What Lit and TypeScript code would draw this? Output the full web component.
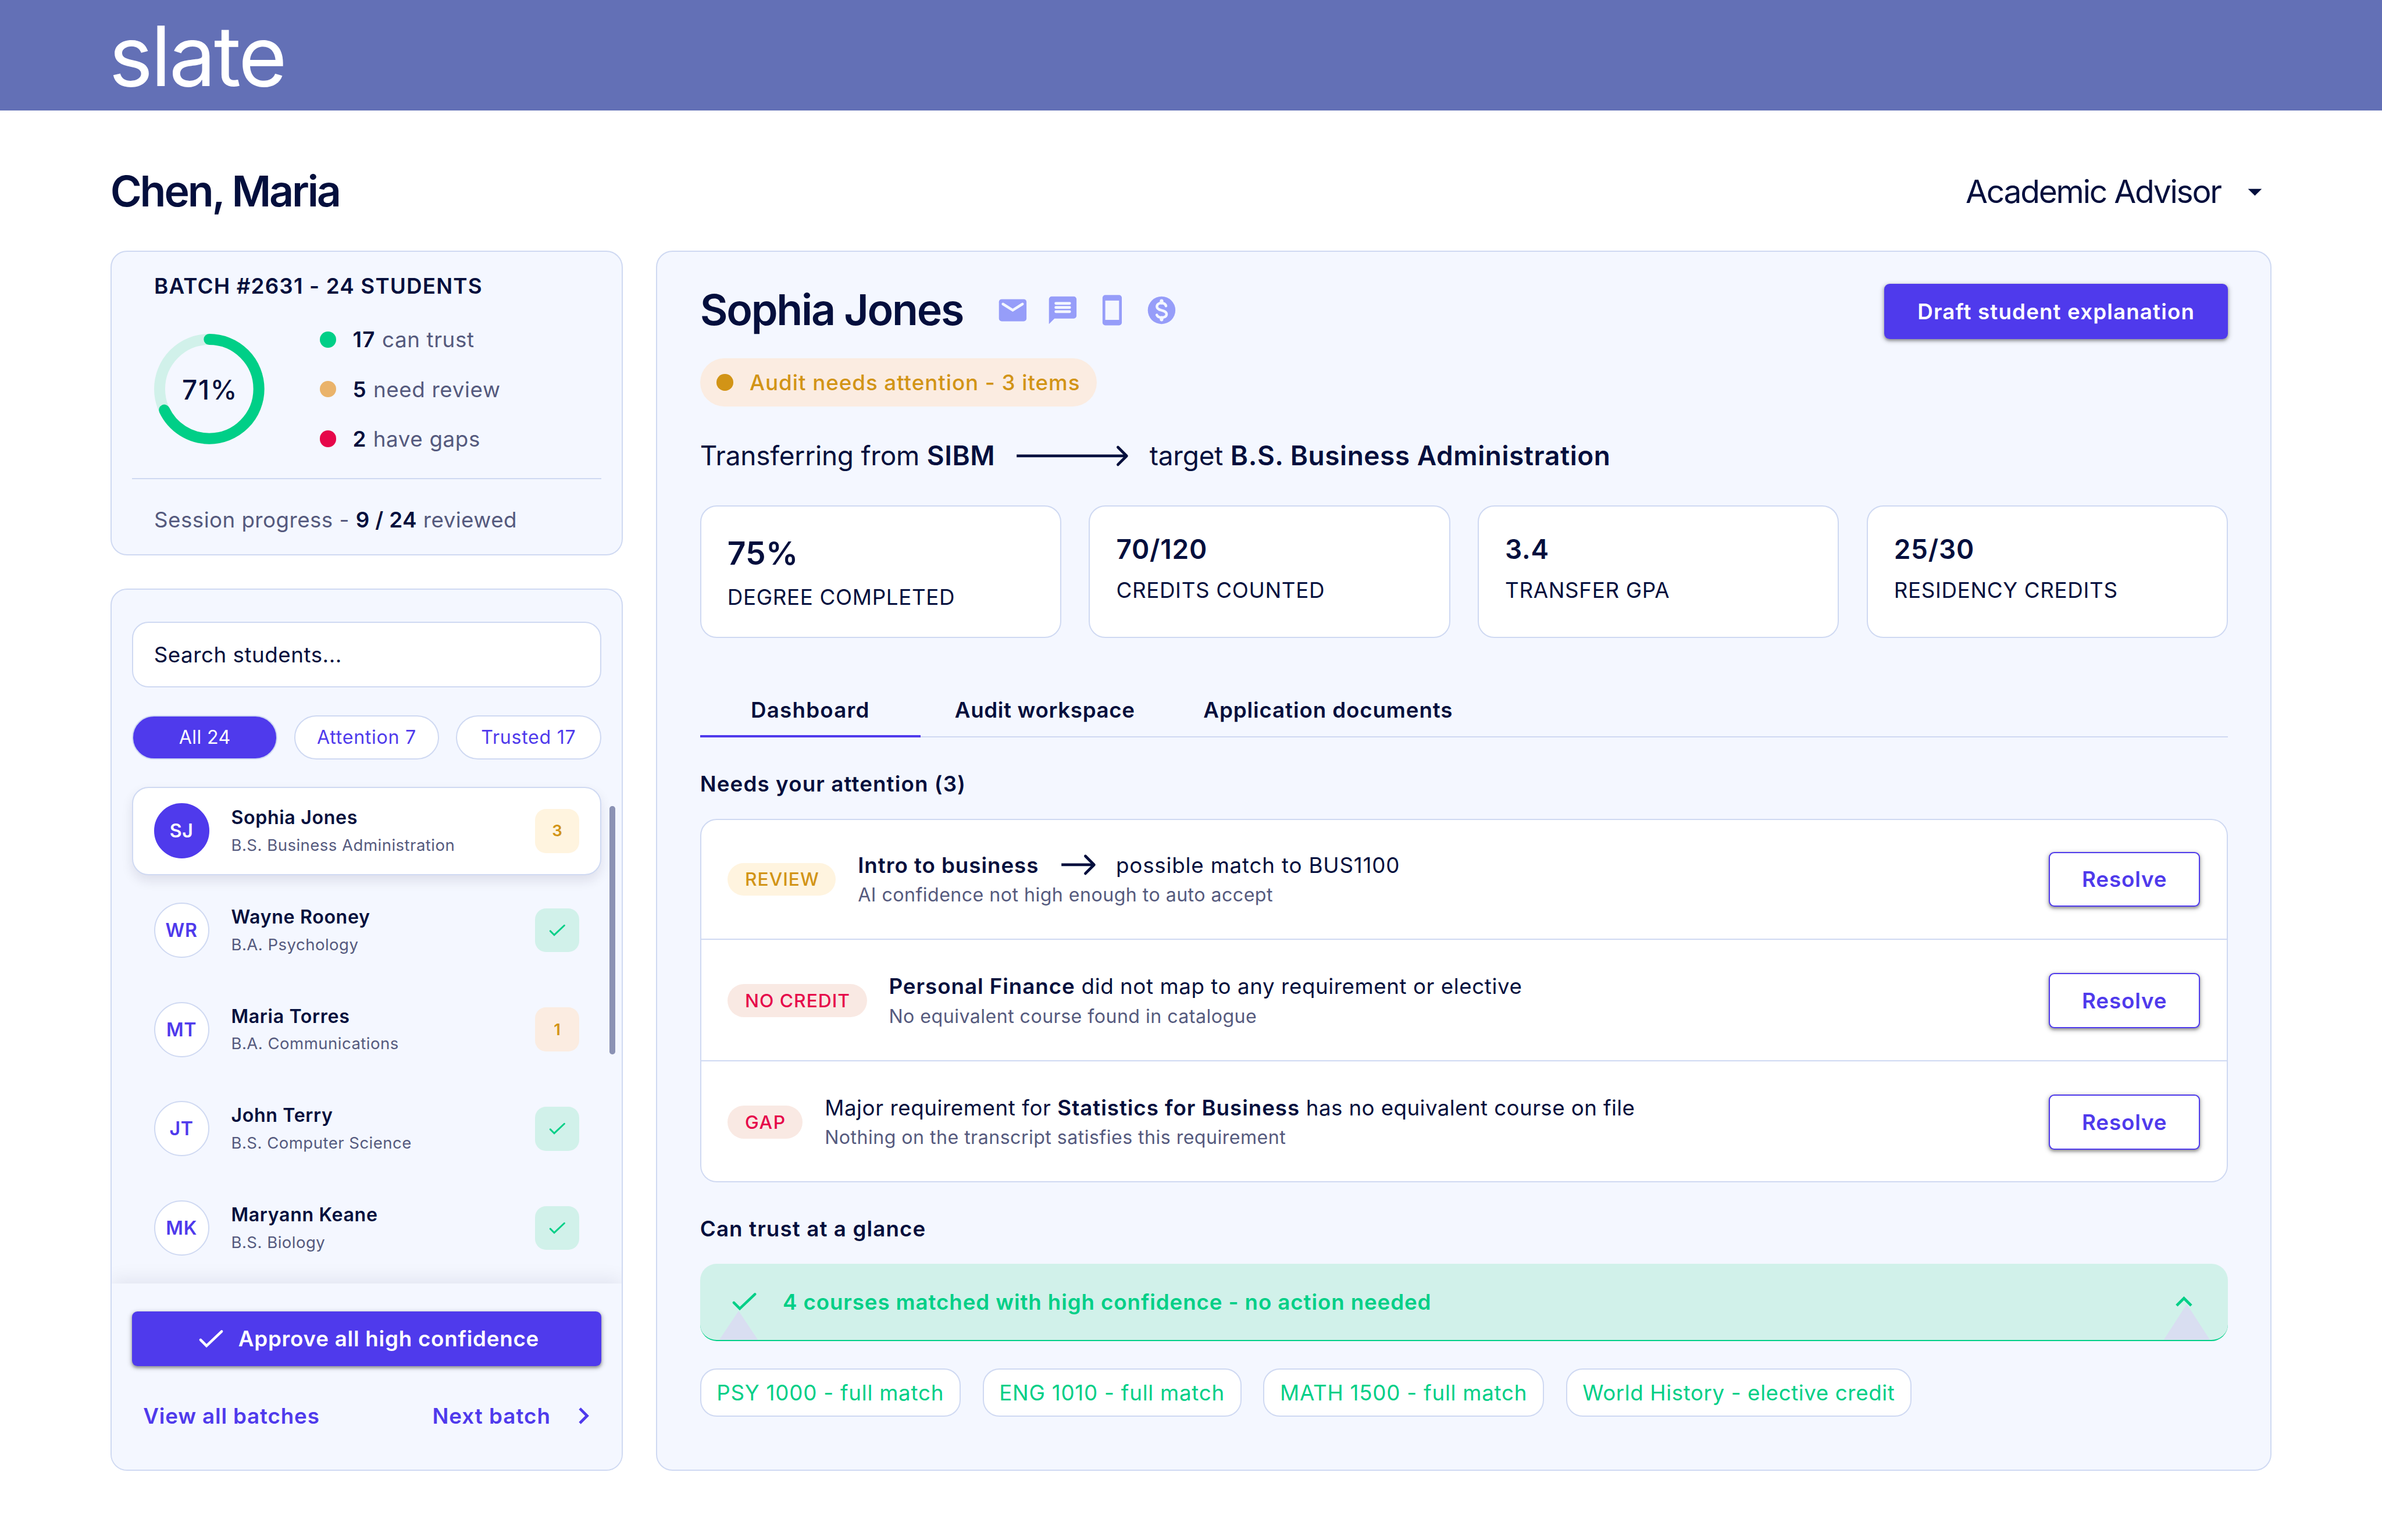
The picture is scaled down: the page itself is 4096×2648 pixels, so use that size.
import { LitElement, html, css, svg } from "lit";
import { customElement } from "lit/decorators.js";
import { classMap } from "lit/directives/class-map.js";

interface Student {
  initials: string;
  name: string;
  program: string;
  review?: number;
  tone: "review" | "gap" | "ok";
  selected?: boolean;
}

const students: Student[] = [
  { initials: "SJ", name: "Sophia Jones", program: "B.S. Business Administration", review: 3, tone: "review", selected: true },
  { initials: "WR", name: "Wayne Rooney", program: "B.A. Psychology", tone: "ok" },
  { initials: "MT", name: "Maria Torres", program: "B.A. Communications", review: 1, tone: "gap" },
  { initials: "JT", name: "John Terry", program: "B.S. Computer Science", tone: "ok" },
  { initials: "MK", name: "Maryann Keane", program: "B.S. Biology", tone: "ok" },
];

const stats = [
  { value: "75%", label: "DEGREE COMPLETED", lead: true },
  { value: "70/120", label: "CREDITS COUNTED", lead: false },
  { value: "3.4", label: "TRANSFER GPA", lead: false },
  { value: "25/30", label: "RESIDENCY CREDITS", lead: false },
];

const matches = [
  "PSY 1000 - full match",
  "ENG 1010 - full match",
  "MATH 1500 - full match",
  "World History - elective credit",
];

const checkShape = svg`<path d="M4.6 12.6L8.9 16.9L19.9 6.5" fill="none" stroke="currentColor" stroke-width="1.9" stroke-linecap="round"/>`;

@customElement("app-root")
export class AppRoot extends LitElement {
  static styles = css`
    :host {
      display: block;
      background: #fff;
    }
    * {
      box-sizing: border-box;
    }
    .page {
      --ink: #040f3d;
      --muted: #555a7e;
      --purple: #4f3aec;
      --line: #cfd9f2;
      --panel: #f4f7ff;
      --green: #00cf87;
      --mint: #d1f1ea;
      --amber: #d29416;
      --red: #e6074a;
      zoom: 2.37037;
      width: 1728px;
      height: 1117px;
      overflow: hidden;
      background: #fff;
      color: var(--ink);
      font-family: Inter, "Liberation Sans", sans-serif;
      font-size: 15.5px;
      line-height: 19px;
      letter-spacing: 0.22px;
      white-space: nowrap;
    }
    svg {
      display: block;
      flex: none;
    }
    b {
      font-weight: 600;
    }
    .topbar {
      height: 80px;
      padding: 1px 79px 0;
      display: flex;
      align-items: center;
      background: #6370b6;
    }
    .logo {
      color: #fff;
      font-size: 60.5px;
      line-height: 82px;
      letter-spacing: -1.45px;
    }
    .titlebar {
      height: 102px;
      padding: 40px 80px 24px;
      display: flex;
      justify-content: space-between;
      align-items: center;
    }
    .advisor {
      font-size: 31px;
      line-height: 38px;
      font-weight: 600;
      letter-spacing: -1.34px;
    }
    .role {
      display: flex;
      align-items: center;
      gap: 13px;
      font-size: 23.25px;
      line-height: 38px;
      letter-spacing: -0.95px;
    }
    .columns {
      display: grid;
      grid-template-columns: 372px 1172px;
      gap: 24px;
      padding: 0 80px;
    }
    .side {
      display: flex;
      flex-direction: column;
      gap: 24px;
    }
    .card {
      background: var(--panel);
      border: 1px solid var(--line);
      border-radius: 12px;
    }

    /* batch summary */
    .batch {
      height: 221px;
      padding: 15px;
      display: flex;
      flex-direction: column;
    }
    .batch-title {
      padding-left: 16px;
      font-weight: 600;
      letter-spacing: 0.5px;
    }
    .batch-body {
      display: flex;
      align-items: center;
      gap: 40px;
      padding: 20px 16px 19px;
    }
    .ring {
      display: grid;
      width: 80px;
      height: 80px;
    }
    .ring > * {
      grid-area: 1 / 1;
      place-self: center;
    }
    .ring-value {
      font-size: 19.4px;
      font-weight: 500;
      letter-spacing: 0.7px;
      padding: 1px 0 0 1px;
    }
    .legend {
      display: flex;
      flex-direction: column;
      gap: 17px;
      color: var(--muted);
      letter-spacing: 0.27px;
    }
    .legend-item {
      display: flex;
      align-items: center;
      gap: 12px;
    }
    .legend b,
    .session b {
      color: var(--ink);
    }
    .legend b {
      letter-spacing: 0.6px;
    }
    .dot {
      width: 12px;
      height: 12px;
      border-radius: 50%;
      flex: none;
    }
    .dot.green {
      background: var(--green);
    }
    .dot.sand {
      background: #eab36a;
    }
    .dot.red {
      background: var(--red);
    }
    .dot.amber {
      background: var(--amber);
    }
    .session {
      border-top: 1px solid var(--line);
      padding: 20px 16px 0;
      color: var(--muted);
      letter-spacing: 0.19px;
    }

    /* student list */
    .roster {
      height: 640px;
      position: relative;
      overflow: hidden;
      display: flex;
      flex-direction: column;
    }
    .roster-top {
      flex: 1;
      padding: 23px 15px 0;
    }
    .search {
      height: 48px;
      padding: 0 15px;
      display: flex;
      align-items: center;
      background: #fff;
      border: 1px solid var(--line);
      border-radius: 12px;
    }
    .filters {
      display: grid;
      grid-template-columns: repeat(3, 1fr);
      gap: 12px;
      margin: 20px 0;
    }
    .filter {
      height: 32px;
      display: flex;
      align-items: center;
      justify-content: center;
      background: #fff;
      border: 1px solid var(--line);
      border-radius: 16px;
      color: var(--purple);
      font-size: 13.57px;
      letter-spacing: 0.3px;
    }
    .filter.on {
      background: var(--purple);
      color: #fff;
      letter-spacing: 0.15px;
    }
    .students {
      display: flex;
      flex-direction: column;
      gap: 8px;
    }
    .student {
      height: 64px;
      padding: 0 15px;
      display: flex;
      align-items: center;
      gap: 16px;
      border: 1px solid transparent;
      border-radius: 12px;
    }
    .student.on {
      background: #fff;
      border-color: var(--line);
      box-shadow: 0 4px 8px rgba(30, 20, 60, 0.1);
    }
    .avatar {
      width: 40px;
      height: 40px;
      display: grid;
      place-items: center;
      border: 1px solid var(--line);
      border-radius: 50%;
      background: #fff;
      color: var(--purple);
      font-size: 13.57px;
      font-weight: 600;
      letter-spacing: 0.27px;
    }
    .on .avatar {
      background: var(--purple);
      border-color: var(--purple);
      color: #fff;
    }
    .who {
      flex: 1;
      display: flex;
      flex-direction: column;
      gap: 4px;
    }
    .name {
      font-size: 13.57px;
      line-height: 17px;
      font-weight: 600;
      letter-spacing: 0.27px;
    }
    .program {
      font-size: 11.63px;
      line-height: 15px;
      letter-spacing: 0.2px;
      color: var(--muted);
    }
    .badge {
      width: 32px;
      height: 32px;
      display: grid;
      place-items: center;
      border-radius: 8px;
      font-size: 11.63px;
      font-weight: 600;
    }
    .badge.ok {
      background: var(--mint);
      color: var(--green);
    }
    .badge.review {
      background: #fff4df;
      color: var(--amber);
    }
    .badge.gap {
      background: #fbece1;
      color: var(--amber);
    }
    .scrollbar {
      position: absolute;
      right: 5px;
      top: 157px;
      width: 4px;
      height: 180px;
      border-radius: 2px;
      background: #8b92b4;
    }
    .roster-foot {
      height: 135px;
      padding: 20px 15px 0;
      background: var(--panel);
      box-shadow: 0 -4px 12px rgba(4, 15, 61, 0.07);
      display: flex;
      flex-direction: column;
      gap: 16px;
    }
    .button {
      height: 40px;
      display: flex;
      align-items: center;
      justify-content: center;
      gap: 8px;
      padding: 0 24px;
      border-radius: 4px;
      background: var(--purple);
      color: #fff;
      font-weight: 600;
      letter-spacing: 0.32px;
      box-shadow: 0 1px 2px rgba(0, 0, 0, 0.3), 0 1px 3px 1px rgba(0, 0, 0, 0.15);
    }
    .button.draft {
      letter-spacing: 0.477px;
    }
    .button.outline {
      width: 110px;
      padding: 0;
      background: #fff;
      border: 1px solid var(--purple);
      color: var(--purple);
      letter-spacing: 0.36px;
    }
    .foot-links {
      height: 40px;
      padding-left: 8px;
      display: flex;
      align-items: center;
      justify-content: space-between;
      color: var(--purple);
      font-weight: 600;
      letter-spacing: 0.36px;
    }
    .next {
      display: flex;
      align-items: center;
      gap: 12px;
      padding-right: 0.7px;
      letter-spacing: 0.42px;
    }

    /* student detail */
    .detail {
      height: 885px;
      padding: 23px 31px 0;
      display: flex;
      flex-direction: column;
    }
    .detail-head {
      display: flex;
      align-items: flex-start;
      justify-content: space-between;
    }
    .identity {
      display: flex;
      align-items: center;
      gap: 24.2px;
    }
    .student-name {
      font-size: 31px;
      line-height: 38px;
      font-weight: 600;
      letter-spacing: -0.95px;
    }
    .contacts {
      display: flex;
      gap: 12px;
      color: #969df9;
    }
    .status {
      align-self: flex-start;
      height: 35px;
      margin-top: 14px;
      padding: 0 12px;
      display: flex;
      align-items: center;
      gap: 12px;
      border-radius: 18px;
      background: #fbece1;
      color: var(--amber);
      font-weight: 500;
      letter-spacing: 0.4px;
    }
    .transfer {
      margin-top: 24px;
      display: flex;
      align-items: center;
      gap: 15px;
      font-size: 19.38px;
      line-height: 24px;
      letter-spacing: -0.08px;
    }
    .transfer b {
      letter-spacing: 0.24px;
    }
    .stats {
      margin-top: 24px;
      display: grid;
      grid-template-columns: repeat(4, 1fr);
      gap: 20px;
    }
    .stat {
      height: 96px;
      padding: 19px;
      display: flex;
      flex-direction: column;
      gap: 8px;
      background: #fff;
      border: 1px solid var(--line);
      border-radius: 12px;
      letter-spacing: 0.28px;
    }
    .stat-value {
      font-size: 19.38px;
      line-height: 24px;
      font-weight: 600;
      letter-spacing: 0.35px;
    }
    .lead .stat-value {
      font-size: 23.25px;
      line-height: 29px;
      letter-spacing: 0.05px;
    }
    .tabs {
      margin-top: 32px;
      height: 40px;
      display: flex;
      border-bottom: 1px solid var(--line);
      font-weight: 600;
      letter-spacing: 0.27px;
    }
    .tab {
      height: 40px;
      min-width: 160px;
      padding: 0 24.8px;
      display: flex;
      align-items: center;
      justify-content: center;
    }
    .tab:last-child {
      letter-spacing: 0.37px;
    }
    .tab.on {
      padding-top: 2px;
      border-bottom: 2px solid var(--purple);
      letter-spacing: 0.52px;
    }
    .section {
      margin: 24px 0 16px;
      font-weight: 600;
      letter-spacing: 0.47px;
    }
    .issues {
      border-radius: 12px;
      background: #fff;
      outline: 1px solid var(--line);
      outline-offset: -1px;
    }
    .issue {
      height: 88px;
      padding: 1px 20px 0;
      display: flex;
      align-items: center;
      gap: 16px;
      border-bottom: 1px solid var(--line);
    }
    .issue:last-child {
      border-bottom-color: transparent;
    }
    .tag {
      height: 24px;
      padding: 0 12px 0 12.6px;
      display: flex;
      align-items: center;
      border-radius: 12px;
      background: #f9e9e3;
      color: var(--red);
      font-size: 13.4px;
      font-weight: 500;
      letter-spacing: 0.42px;
    }
    .tag.gap {
      letter-spacing: 0.7px;
    }
    .tag.review {
      background: #fff4df;
      color: var(--amber);
    }
    .issue-text {
      flex: 1;
      display: flex;
      flex-direction: column;
      gap: 4px;
    }
    .issue-title {
      display: flex;
      align-items: center;
      letter-spacing: 0.24px;
      white-space: pre;
    }
    .issue-title svg {
      margin: 0 14px 0 16px;
    }
    .issue-title b {
      letter-spacing: 0.4px;
    }
    .target {
      letter-spacing: 0.34px;
    }
    .tail {
      letter-spacing: 0.17px;
    }
    .issue-note {
      font-size: 13.57px;
      line-height: 17px;
      letter-spacing: 0.19px;
      color: var(--muted);
    }
    .trusted {
      height: 56px;
      position: relative;
      padding: 0 20px;
      display: flex;
      align-items: center;
      gap: 16px;
      border-bottom: 1px solid var(--green);
      border-radius: 12px;
      background: var(--mint);
      color: var(--green);
      font-weight: 600;
      letter-spacing: 0.37px;
    }
    .trusted > span {
      flex: 1;
    }
    .trusted > svg,
    .trusted > span {
      position: relative;
    }
    .trusted > .peak {
      position: absolute;
      bottom: 0;
      background: #d9def1;
      clip-path: polygon(50% 0, 100% 100%, 0 100%);
    }
    .peak.left {
      left: 14px;
      width: 28px;
      height: 21px;
    }
    .peak.right {
      right: 13px;
      width: 33.5px;
      height: 26px;
    }
    .matches {
      margin-top: 20px;
      display: flex;
      gap: 16px;
    }
    .match {
      height: 35px;
      padding: 0 11.2px;
      display: flex;
      align-items: center;
      background: #fff;
      border: 1px solid var(--line);
      border-radius: 12px;
      color: var(--green);
      letter-spacing: 0.32px;
    }
    .match:last-child {
      letter-spacing: 0.25px;
    }
  `;

  private check(size: number) {
    return html`<svg width=${size} height=${size} viewBox="0 0 24 24">${checkShape}</svg>`;
  }

  private renderStudent(s: Student) {
    return html`
      <div class=${classMap({ student: true, on: !!s.selected })}>
        <div class="avatar">${s.initials}</div>
        <div class="who">
          <div class="name">${s.name}</div>
          <div class="program">${s.program}</div>
        </div>
        <div class="badge ${s.tone}">${s.review ?? this.check(16)}</div>
      </div>
    `;
  }

  private renderSide() {
    return html`
      <div class="side">
        <section class="card batch">
          <div class="batch-title">BATCH #2631 - 24 STUDENTS</div>
          <div class="batch-body">
            <div class="ring">
              <svg width="80" height="80" viewBox="0 0 80 80" fill="none" stroke-width="8">
                <circle cx="40" cy="40" r="36" stroke="#d1f1ea" />
                <circle
                  cx="40" cy="40" r="36" stroke="#00cf87" stroke-linecap="round"
                  pathLength="100" stroke-dasharray="68 100" transform="rotate(-90 40 40)"
                />
              </svg>
              <span class="ring-value">71%</span>
            </div>
            <div class="legend">
              <div class="legend-item"><i class="dot green"></i><span><b>17</b> can trust</span></div>
              <div class="legend-item"><i class="dot sand"></i><span><b>5</b> need review</span></div>
              <div class="legend-item"><i class="dot red"></i><span><b>2</b> have gaps</span></div>
            </div>
          </div>
          <div class="session">Session progress - <b>9 / 24</b> reviewed</div>
        </section>

        <section class="card roster">
          <div class="roster-top">
            <div class="search">Search students...</div>
            <div class="filters">
              <div class="filter on">All 24</div>
              <div class="filter">Attention 7</div>
              <div class="filter">Trusted 17</div>
            </div>
            <div class="students">${students.map((s) => this.renderStudent(s))}</div>
          </div>
          <div class="scrollbar"></div>
          <div class="roster-foot">
            <div class="button">${this.check(24)}<span>Approve all high confidence</span></div>
            <div class="foot-links">
              <span>View all batches</span>
              <span class="next">
                Next batch
                <svg width="24" height="24" viewBox="0 0 24 24">
                  <path fill="currentColor" d="M8.59 16.59L13.17 12 8.59 7.41 10 6l6 6-6 6z" />
                </svg>
              </span>
            </div>
          </div>
        </section>
      </div>
    `;
  }

  private renderContacts() {
    return html`
      <div class="contacts">
        <svg width="24" height="24" viewBox="0 0 24 24">
          <rect x="2" y="4" width="20" height="16" rx="2" fill="currentColor" />
          <path d="M4.9 7.5L12 12L19.1 7.5" fill="none" stroke="#f4f7ff" stroke-width="1.9" stroke-linecap="round" />
        </svg>
        <svg width="24" height="24" viewBox="0 0 24 24">
          <path fill="currentColor" d="M4 2h16a2 2 0 0 1 2 2v12a2 2 0 0 1-2 2H6l-4 4V4a2 2 0 0 1 2-2z" />
          <path d="M7 7h10M7 10h10M7 13h10" stroke="#f4f7ff" stroke-width="2" stroke-linecap="round" />
        </svg>
        <svg width="24" height="24" viewBox="0 0 24 24">
          <rect x="5" y="1" width="14" height="22" rx="2" fill="currentColor" />
          <rect x="7" y="5" width="10" height="14" fill="#f4f7ff" />
        </svg>
        <svg width="24" height="24" viewBox="0 0 24 24" fill="none" stroke="#f4f7ff" stroke-linecap="round">
          <circle cx="12" cy="12" r="10" fill="currentColor" stroke="none" />
          <path stroke-width="2.6" d="M12 5.3v1.2M12 17.5v1.2" />
          <path
            stroke-width="1.9"
            d="M15.2 8.9C14.8 7.5 13.6 6.7 12 6.7C10 6.7 8.6 7.8 8.6 9.4C8.6 11 10 11.6 12 12.1C14.2 12.7 15.6 13.3 15.6 14.9C15.6 16.5 14 17.3 12.1 17.3C10.2 17.3 9 16.6 8.5 15.4"
          />
        </svg>
      </div>
    `;
  }

  private renderIssues() {
    return html`
      <div class="issues">
        <div class="issue">
          <div class="tag review">REVIEW</div>
          <div class="issue-text">
            <div class="issue-title"><b>Intro to business</b><svg width="26" height="16" viewBox="0 0 26 16" fill="none" stroke="currentColor" stroke-width="2"><path d="M0.5 8H24" /><path d="M17.9 1.7L24.2 8L17.9 14.3" stroke-linecap="round" stroke-linejoin="round" /></svg><span class="target">possible match to BUS1100</span></div>
            <div class="issue-note">AI confidence not high enough to auto accept</div>
          </div>
          <div class="button outline">Resolve</div>
        </div>
        <div class="issue">
          <div class="tag">NO CREDIT</div>
          <div class="issue-text">
            <div class="issue-title"><b>Personal Finance</b> did not map to any requirement or elective</div>
            <div class="issue-note">No equivalent course found in catalogue</div>
          </div>
          <div class="button outline">Resolve</div>
        </div>
        <div class="issue">
          <div class="tag gap">GAP</div>
          <div class="issue-text">
            <div class="issue-title">Major requirement for <b>Statistics for Business</b><span class="tail"> has no equivalent course on file</span></div>
            <div class="issue-note">Nothing on the transcript satisfies this requirement</div>
          </div>
          <div class="button outline">Resolve</div>
        </div>
      </div>
    `;
  }

  private renderDetail() {
    return html`
      <section class="card detail">
        <div class="detail-head">
          <div class="identity">
            <div class="student-name">Sophia Jones</div>
            ${this.renderContacts()}
          </div>
          <div class="button draft">Draft student explanation</div>
        </div>
        <div class="status"><i class="dot amber"></i>Audit needs attention - 3 items</div>
        <div class="transfer">
          <span>Transferring from <b>SIBM</b></span>
          <svg width="82" height="16" viewBox="0 0 82 16" fill="none" stroke="currentColor" stroke-width="2">
            <path d="M0.5 8H80" />
            <path d="M74 1.7L80.3 8L74 14.3" stroke-linecap="round" stroke-linejoin="round" />
          </svg>
          <span>target <b>B.S. Business Administration</b></span>
        </div>
        <div class="stats">
          ${stats.map(
            (s) => html`
              <div class=${classMap({ stat: true, lead: s.lead })}>
                <div class="stat-value">${s.value}</div>
                <div>${s.label}</div>
              </div>
            `
          )}
        </div>
        <div class="tabs">
          <div class="tab on">Dashboard</div>
          <div class="tab">Audit workspace</div>
          <div class="tab">Application documents</div>
        </div>
        <div class="section">Needs your attention (3)</div>
        ${this.renderIssues()}
        <div class="section">Can trust at a glance</div>
        <div class="trusted">
          <i class="peak left"></i>
          <i class="peak right"></i>
          ${this.check(24)}
          <span>4 courses matched with high confidence - no action needed</span>
          <svg width="24" height="24" viewBox="0 0 24 24">
            <path fill="currentColor" d="M12 8l-6 6 1.41 1.41L12 10.83l4.59 4.58L18 14z" />
          </svg>
        </div>
        <div class="matches">${matches.map((m) => html`<div class="match">${m}</div>`)}</div>
      </section>
    `;
  }

  render() {
    return html`
      <div class="page">
        <header class="topbar"><div class="logo">slate</div></header>
        <div class="titlebar">
          <div class="advisor">Chen, Maria</div>
          <div class="role">
            Academic Advisor
            <svg width="24" height="24" viewBox="0 0 24 24"><path fill="currentColor" d="M7 10l5 5 5-5z" /></svg>
          </div>
        </div>
        <main class="columns">${this.renderSide()}${this.renderDetail()}</main>
      </div>
    `;
  }
}
